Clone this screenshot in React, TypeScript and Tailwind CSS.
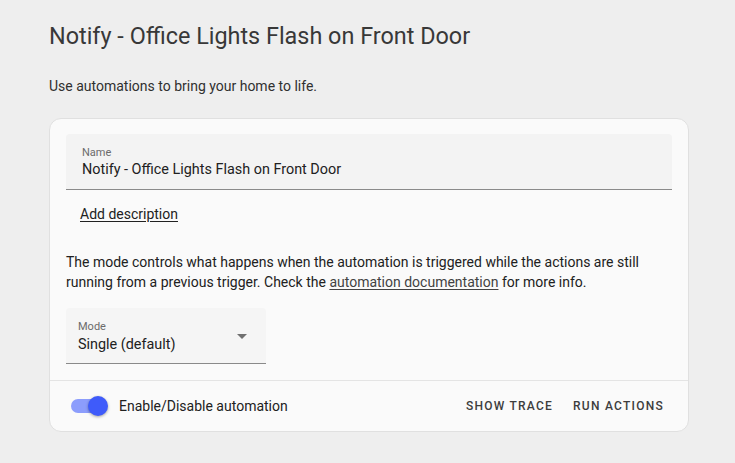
import React from "react";

export default function App() {
  return (
    <div className="min-h-[463px] w-[735px] bg-[#eeeeee] text-[#212121]" style={{ fontFamily: "Roboto, 'Noto Sans', sans-serif" }}>
      <div className="ml-[49px] w-[640px] pt-[20px]">
        <h1 className="text-[23.4px] leading-[32px] font-normal text-[#383838]">Notify - Office Lights Flash on Front Door</h1>
        <p className="mt-[24px] text-[14px] leading-[20px] text-[#303030]">Use automations to bring your home to life.</p>
        <div className="mt-[22px] rounded-[12px] border border-[#e0e0e0] bg-[#fafafa]">
          <div className="px-[16px] pt-[15px] pb-[16px]">
            <div className="h-[56px] rounded-t-[4px] border-b border-[#8a8a8a] bg-[#f3f3f3] pl-[16px] pt-[12px]">
              <div className="text-[11px] leading-[14px] text-[#6b6b6b]">Name</div>
              <div className="text-[14.4px] leading-[20px] text-[#212121]">Notify - Office Lights Flash on Front Door</div>
            </div>
            <div className="mt-[14px] pl-[14px] text-[14px] leading-[20px]">
              <span className="underline underline-offset-2 text-[#212121]">Add description</span>
            </div>
            <p className="mt-[28px] text-[14px] leading-[20px] text-[#212121]">
              The mode controls what happens when the automation is triggered while the actions are still running from a previous trigger. Check the{" "}
              <span className="underline underline-offset-2 text-[#424242]">automation documentation</span> for more info.
            </p>
            <div className="relative mt-[16px] h-[56px] w-[200px] rounded-t-[4px] border-b border-[#8a8a8a] bg-[#f5f5f5] pl-[12px] pt-[12px]">
              <div className="text-[11px] leading-[14px] text-[#6b6b6b]">Mode</div>
              <div className="mt-[1px] text-[14.4px] leading-[20px] text-[#212121]">Single (default)</div>
              <svg className="absolute right-[19px] top-[26px]" width="10" height="5" viewBox="0 0 10 5">
                <path d="M0 0 L10 0 L5 5 Z" fill="#707070" />
              </svg>
            </div>
          </div>
          <div className="flex h-[51px] items-center border-t border-[#e4e4e4] pl-[21px] pr-[16px]">
            <div className="relative h-[20px] w-[37px]">
              <div className="absolute left-0 top-[3px] h-[14px] w-[34px] rounded-full bg-[#8c9dfc]" />
              <div className="absolute right-0 top-0 h-[20px] w-[20px] rounded-full bg-[#3f5bfa] shadow-[0_1px_3px_rgba(0,0,0,0.35)]" />
            </div>
            <span className="ml-[11px] text-[14px] leading-[20px] text-[#212121]">Enable/Disable automation</span>
            <div className="ml-auto flex items-center gap-[4px]">
              <button className="px-[8px] py-[6px] text-[12px] font-medium tracking-[1.25px] text-[#3d3d3d]">SHOW TRACE</button>
              <button className="px-[8px] py-[6px] text-[12px] font-medium tracking-[1.25px] text-[#3d3d3d]">RUN ACTIONS</button>
            </div>
          </div>
        </div>
      </div>
    </div>
  );
}
